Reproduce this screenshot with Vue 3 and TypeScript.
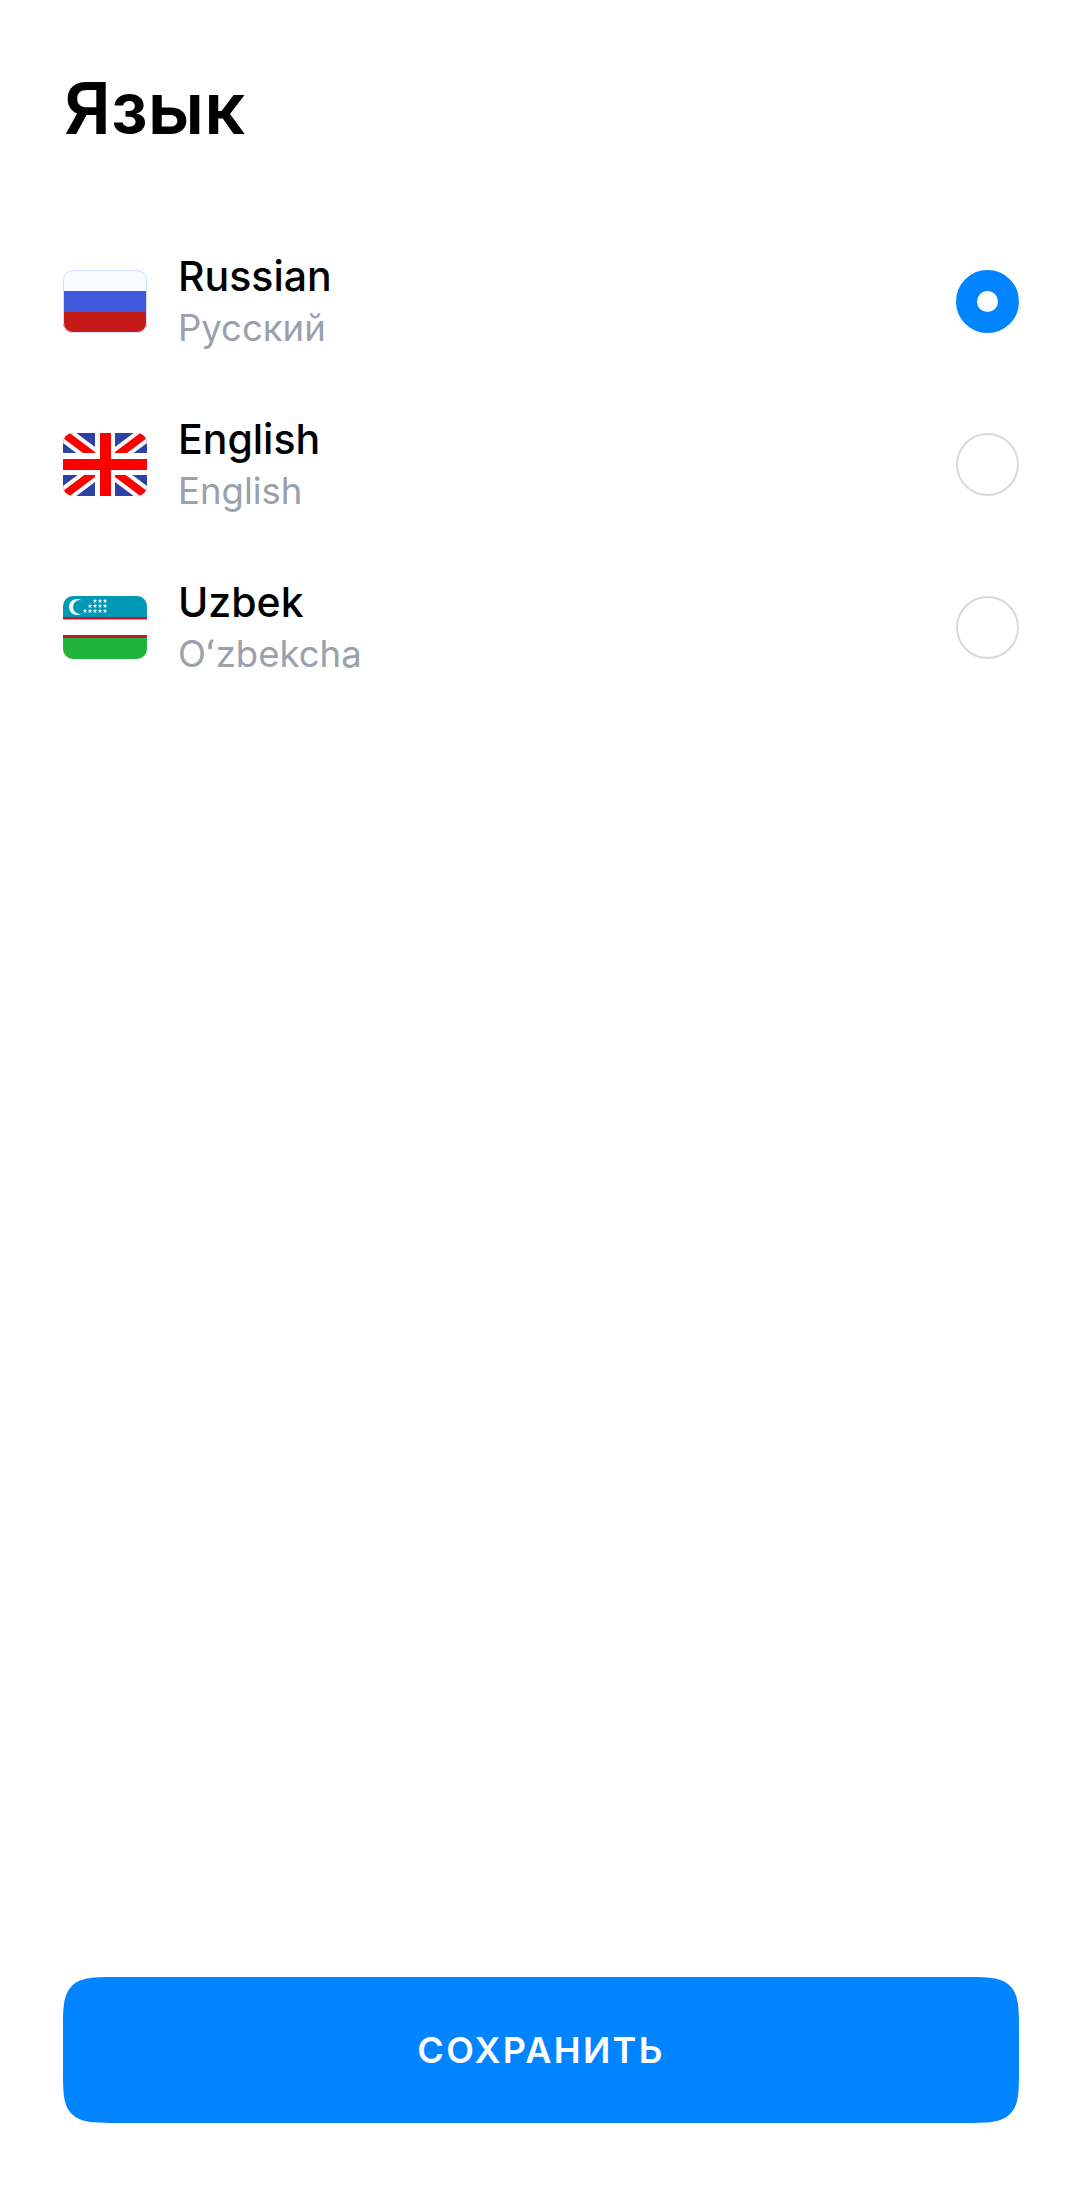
<script setup lang="ts">
import { ref } from "vue";

interface Lang {
  id: string;
  name: string;
  native: string;
}

const langs: Lang[] = [
  { id: "ru", name: "Russian", native: "Русский" },
  { id: "en", name: "English", native: "English" },
  { id: "uz", name: "Uzbek", native: "Oʻzbekcha" },
];

const current = ref("ru");

const stars = [
  [32, 5], [37, 5], [42, 5],
  [27, 10], [32, 10], [37, 10], [42, 10],
  [22, 15], [27, 15], [32, 15], [37, 15], [42, 15],
];

// five pointed star around a point
const starPoints = (cx: number, cy: number) => {
  const pts: string[] = [];
  for (let i = 0; i < 10; i++) {
    const r = i % 2 === 0 ? 2.4 : 1;
    const a = -Math.PI / 2 + (i * Math.PI) / 5;
    pts.push(`${(cx + r * Math.cos(a)).toFixed(2)},${(cy + r * Math.sin(a)).toFixed(2)}`);
  }
  return pts.join(" ");
};
</script>

<template>
  <div class="page">
    <h1 class="title">Язык</h1>

    <div class="list">
      <div v-for="lang in langs" :key="lang.id" class="row" @click="current = lang.id">
        <svg class="flag" viewBox="0 0 84 63" width="84" height="63">
          <defs>
            <clipPath :id="'clip-' + lang.id">
              <rect width="84" height="63" rx="10" />
            </clipPath>
          </defs>
          <g :clip-path="'url(#clip-' + lang.id + ')'">
            <template v-if="lang.id === 'ru'">
              <rect width="84" height="21" fill="#f7fcff" />
              <rect y="21" width="84" height="21" fill="#3f58dc" />
              <rect y="42" width="84" height="21" fill="#c51a18" />
            </template>
            <template v-else-if="lang.id === 'en'">
              <rect width="84" height="63" fill="#2e42a5" />
              <path d="M0 0L84 63M84 0L0 63" stroke="#fff" stroke-width="16" />
              <path d="M0 0L84 63M84 0L0 63" stroke="#f00" stroke-width="8" />
              <rect x="32" width="20" height="63" fill="#fff" />
              <rect y="20" width="84" height="22" fill="#fff" />
              <rect x="37" width="11" height="63" fill="#f00" />
              <rect y="26" width="84" height="11" fill="#f00" />
            </template>
            <template v-else>
              <rect width="84" height="21" fill="#0099b5" />
              <rect y="21" width="84" height="21" fill="#fff" />
              <rect y="42" width="84" height="21" fill="#1eb53a" />
              <rect y="21" width="84" height="2.5" fill="#ce1126" />
              <rect y="39" width="84" height="3" fill="#ce1126" />
              <circle cx="14" cy="11" r="8" fill="#fff" />
              <circle cx="17" cy="11" r="7" fill="#0099b5" />
              <polygon v-for="(s, i) in stars" :key="i" :points="starPoints(s[0], s[1])" fill="#fff" />
            </template>
          </g>
          <rect v-if="lang.id === 'ru'" x="0.5" y="0.5" width="83" height="62" rx="9.5" fill="none" stroke="#d4dcff" stroke-width="1" />
        </svg>

        <div class="texts">
          <div class="name">{{ lang.name }}</div>
          <div class="native">{{ lang.native }}</div>
        </div>

        <div :class="['radio', { active: current === lang.id }]"></div>
      </div>
    </div>

    <button class="save">СОХРАНИТЬ</button>
  </div>
</template>

<style scoped>
.page {
  box-sizing: border-box;
  height: 2202px;
  padding: 64px 63px 79px;
  display: flex;
  flex-direction: column;
  background: #fff;
  font-family: Inter, "Noto Sans", sans-serif;
}

.title {
  margin: 0 0 0 1px;
  font-size: 72px;
  line-height: 88px;
  font-weight: 600;
  color: #000;
}

.list {
  flex: 1;
  margin-top: 68px;
  display: flex;
  flex-direction: column;
}

.row {
  height: 163px;
  display: flex;
  align-items: center;
  cursor: pointer;
}

.flag {
  flex: none;
}

.texts {
  flex: 1;
  margin-left: 31px;
}

.name {
  font-size: 41px;
  line-height: 52px;
  font-weight: 500;
  color: #000;
}

.native {
  font-size: 36.5px;
  line-height: 52px;
  color: #9aa1ac;
}

.radio {
  box-sizing: border-box;
  width: 63px;
  height: 63px;
  border-radius: 50%;
  border: 2.5px solid #d9dadd;
}

.radio.active {
  border: 21px solid #0084ff;
  background: #fff;
}

.save {
  height: 146px;
  border: none;
  border-radius: 56px;
  corner-shape: squircle;
  background: #0084ff;
  color: #fff;
  font-family: inherit;
  font-size: 36px;
  font-weight: 600;
  letter-spacing: 2.3px;
}
</style>
